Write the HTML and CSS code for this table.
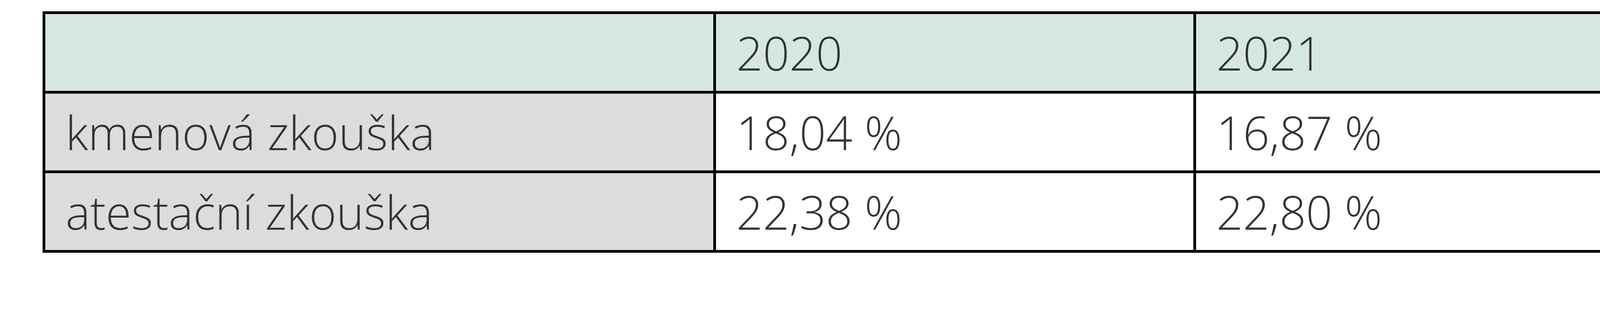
FILE: index.html
```html
<!DOCTYPE html>
<html lang="cs">
<head>
<meta charset="utf-8">
<title>Tabulka</title>
<link rel="stylesheet" href="styles.css">
</head>
<body>
<table class="stats">
  <colgroup>
    <col class="c-label">
    <col class="c-year">
    <col class="c-year2">
  </colgroup>
  <thead>
    <tr class="head">
      <th class="blank"></th>
      <th>2020</th>
      <th>2021</th>
    </tr>
  </thead>
  <tbody>
    <tr>
      <th class="label">kmenová zkouška</th>
      <td>18,04 %</td>
      <td>16,87 %</td>
    </tr>
    <tr>
      <th class="label">atestační zkouška</th>
      <td>22,38 %</td>
      <td>22,80 %</td>
    </tr>
  </tbody>
</table>
</body>
</html>
```

FILE: styles.css
```css
html, body {
  margin: 0;
  padding: 0;
  background: #ffffff;
}

.stats {
  margin: 29px 0 0 109px;
  border-collapse: separate;
  border-spacing: 7px;
  background: #000000;
  table-layout: fixed;
  width: 4190px;
  font-family: "Open Sans", "Noto Sans", sans-serif;
  font-weight: 300;
  font-size: 119px;
  line-height: normal;
  color: #333333;
}

.c-label { width: 1710px; }
.c-year { width: 1222px; }
.c-year2 { width: 1230px; }

.stats th,
.stats td {
  height: 197px;
  padding: 0 0 0 52px;
  text-align: left;
  vertical-align: middle;
  font-weight: 300;
  white-space: nowrap;
  background: #ffffff;
}

.head th {
  background: #d6e7e3;
}

.stats th.label {
  background: #dcdcdc;
}
```
